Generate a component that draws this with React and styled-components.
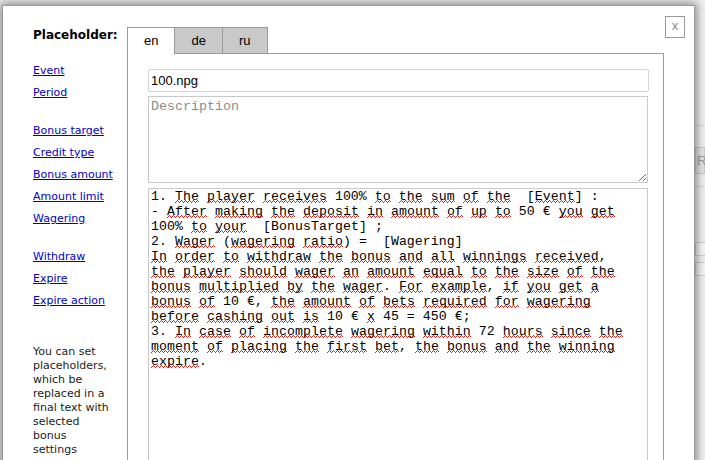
import React from 'react';
import styled, { createGlobalStyle } from 'styled-components';

const GlobalStyle = createGlobalStyle`
  html, body { margin: 0; padding: 0; }
  body {
    background: #f1f1f1;
    overflow: hidden;
    font-family: "DejaVu Sans", Verdana, sans-serif;
  }
`;

const Page = styled.div`
  position: relative;
  width: 705px;
  height: 460px;
  overflow: hidden;
  background: #f1f1f1;
`;

/* the page that lies under the dialog */
const BehindPage = styled.div`
  display: flex;
  flex-direction: column;
  padding: 125px 0 0 695px;
`;

const BehindRule = styled.div`
  height: 1px;
  background: #d6d6d6;
  margin-bottom: ${(p) => p.$gap}px;
`;

const BehindButton = styled.div`
  height: 25px;
  border: 1px solid #cdcdcd;
  background: #e6e6e6;
  color: #a0a0a0;
  font: 13px/25px "Liberation Sans", Arial, sans-serif;
  padding-left: 1px;
  white-space: nowrap;
  margin-bottom: ${(p) => p.$gap}px;
`;

const BehindField = styled.div`
  height: 12px;
  width: 30px;
  border: 1px solid #d0d0d0;
  background: #f7f7f7;
  margin-bottom: ${(p) => p.$gap}px;
`;

/* dialog */
const Dialog = styled.div`
  position: absolute;
  top: 5px;
  left: 2px;
  width: 693px;
  height: 560px;
  box-sizing: border-box;
  background: #fff;
  border: 1px solid #9c9c9c;
  box-shadow: 0 0 9px 2px rgba(0, 0, 0, 0.45);
  display: flex;
`;

const CloseButton = styled.button`
  position: absolute;
  top: 10px;
  right: 9px;
  width: 20px;
  height: 22px;
  box-sizing: border-box;
  padding: 0 0 2px;
  border: 1px solid #9a9a9a;
  background: #fff;
  color: #8a8a8a;
  font: 13px/18px "Liberation Sans", Arial, sans-serif;
  text-align: center;
  cursor: pointer;
`;

const Sidebar = styled.aside`
  width: 124px;
  flex: none;
  box-sizing: border-box;
  padding: 21px 0 0 30px;
  display: flex;
  flex-direction: column;
`;

const SideTitle = styled.div`
  font-weight: bold;
  font-size: 12px;
  line-height: 16px;
  color: #000;
  margin-bottom: 17px;
  white-space: nowrap;
`;

const LinkGroup = styled.div`
  display: flex;
  flex-direction: column;
  margin-bottom: ${(p) => p.$gap}px;
`;

const PlaceLink = styled.a`
  display: block;
  font-size: 11px;
  line-height: 22px;
  height: 22px;
  color: #0000cc;
  text-decoration: underline;
  white-space: nowrap;
  align-self: flex-start;
  cursor: pointer;
`;

const SideNote = styled.p`
  margin: 0;
  width: 78px;
  font-size: 11px;
  line-height: 14px;
  color: #1a1a1a;
`;

const Main = styled.div`
  flex: none;
  padding-top: 21px;
  display: flex;
  flex-direction: column;
`;

const TabRow = styled.div`
  display: flex;
  align-items: flex-end;
`;

const Tab = styled.div`
  box-sizing: border-box;
  height: ${(p) => (p.$active ? 27 : 26)}px;
  margin-bottom: ${(p) => (p.$active ? -1 : 0)}px;
  margin-left: ${(p) => (p.$first ? 0 : -1)}px;
  padding: 0 16px;
  border: 1px solid #9a9a9a;
  border-bottom: none;
  background: ${(p) => (p.$active ? '#fff' : '#c9c9c9')};
  position: relative;
  z-index: ${(p) => (p.$active ? 1 : 0)};
  font: 13px/25px "Liberation Sans", Arial, sans-serif;
  color: #000;
  cursor: pointer;
`;

const Panel = styled.div`
  width: 537px;
  height: 480px;
  box-sizing: border-box;
  border: 1px solid #9a9a9a;
  padding: 15px 0 0 20px;
  background: #fff;
  display: flex;
  flex-direction: column;
`;

const NameInput = styled.input`
  display: block;
  width: 501px;
  height: 23px;
  box-sizing: border-box;
  margin: 0;
  padding: 0 2px;
  border: 1px solid #d0d4dc;
  border-radius: 2px;
  font: 13px "Liberation Sans", Arial, sans-serif;
  color: #000;
  outline: none;
`;

const DescArea = styled.textarea`
  display: block;
  width: 500px;
  height: 87px;
  box-sizing: border-box;
  margin: 4px 0 0;
  padding: 2px 2px;
  border: 1px solid #c9c9c9;
  font: 13.33px/15px "Liberation Mono", "Courier New", monospace;
  color: #000;
  outline: none;
  &::placeholder {
    color: #8c8c8c;
  }
`;

const BodyText = styled.div`
  width: 500px;
  height: 300px;
  box-sizing: border-box;
  margin-top: 5px;
  padding: 0 18px 0 2px;
  border: 1px solid #c9c9c9;
  font: 13.2px/15px "Liberation Mono", "Courier New", monospace;
  letter-spacing: 0.08px;
  color: #000;
  white-space: pre-wrap;
  overflow: hidden;
`;

/* spell-check squiggle: 4px period, three pixel rows under the baseline */
const Squiggle = styled.span`
  background-image:
    linear-gradient(to right, transparent 2px, #e8201a 2px, #e8201a 3px, transparent 3px),
    linear-gradient(to right, transparent 1px, #e8201a 1px, #e8201a 2px, transparent 2px, transparent 3px, #e8201a 3px),
    linear-gradient(to right, #e8201a 1px, transparent 1px);
  background-size: 4px 1px;
  background-repeat: repeat-x;
  background-position: 0 calc(100% - 3px), 0 calc(100% - 2px), 0 calc(100% - 1px);
`;

const BODY =
  '1. The player receives 100% to the sum of the  [Event] :\n' +
  '- After making the deposit in amount of up to 50 € you get 100% to your  [BonusTarget] ;\n' +
  '2. Wager (wagering ratio) =  [Wagering]\n' +
  'In order to withdraw the bonus and all winnings received, the player should wager an amount equal to the size of the bonus multiplied by the wager. For example, if you get a bonus of 10 €, the amount of bets required for wagering before cashing out is 10 € x 45 = 450 €;\n' +
  '3. In case of incomplete wagering within 72 hours since the moment of placing the first bet, the bonus and the winning expire.';

const renderBody = (text) =>
  text.split(/(\[BonusTarget\]|\[Wagering\]|[A-Za-z]+)/).map((part, i) => {
    if (part === '[BonusTarget]' || part === '[Wagering]') return part;
    if (/^[A-Za-z]+$/.test(part)) return <Squiggle key={i}>{part}</Squiggle>;
    return part;
  });

const groups = [
  ['Event', 'Period'],
  ['Bonus target', 'Credit type', 'Bonus amount', 'Amount limit', 'Wagering'],
  ['Withdraw', 'Expire', 'Expire action'],
];

const tabs = ['en', 'de', 'ru'];

export default function App() {
  return (
    <>
      <GlobalStyle />
      <Page>
        <BehindPage>
          <BehindRule $gap={21} />
          <BehindButton $gap={12}>Reset</BehindButton>
          <BehindRule $gap={55} />
          <BehindField $gap={6} />
          <BehindField $gap={0} />
        </BehindPage>

        <Dialog>
          <CloseButton>x</CloseButton>
          <Sidebar>
            <SideTitle>Placeholder:</SideTitle>
            {groups.map((g, gi) => (
              <LinkGroup key={gi} $gap={gi === groups.length - 1 ? 33 : 16}>
                {g.map((l) => (
                  <PlaceLink key={l}>{l}</PlaceLink>
                ))}
              </LinkGroup>
            ))}
            <SideNote>
              You can set placeholders, which be replaced in a final text with selected bonus settings
            </SideNote>
          </Sidebar>

          <Main>
            <TabRow>
              {tabs.map((t, i) => (
                <Tab key={t} $active={i === 0} $first={i === 0}>
                  {t}
                </Tab>
              ))}
            </TabRow>
            <Panel>
              <NameInput defaultValue="100.npg" spellCheck={false} />
              <DescArea placeholder="Description" spellCheck={false} />
              <BodyText>{renderBody(BODY)}</BodyText>
            </Panel>
          </Main>
        </Dialog>
      </Page>
    </>
  );
}
